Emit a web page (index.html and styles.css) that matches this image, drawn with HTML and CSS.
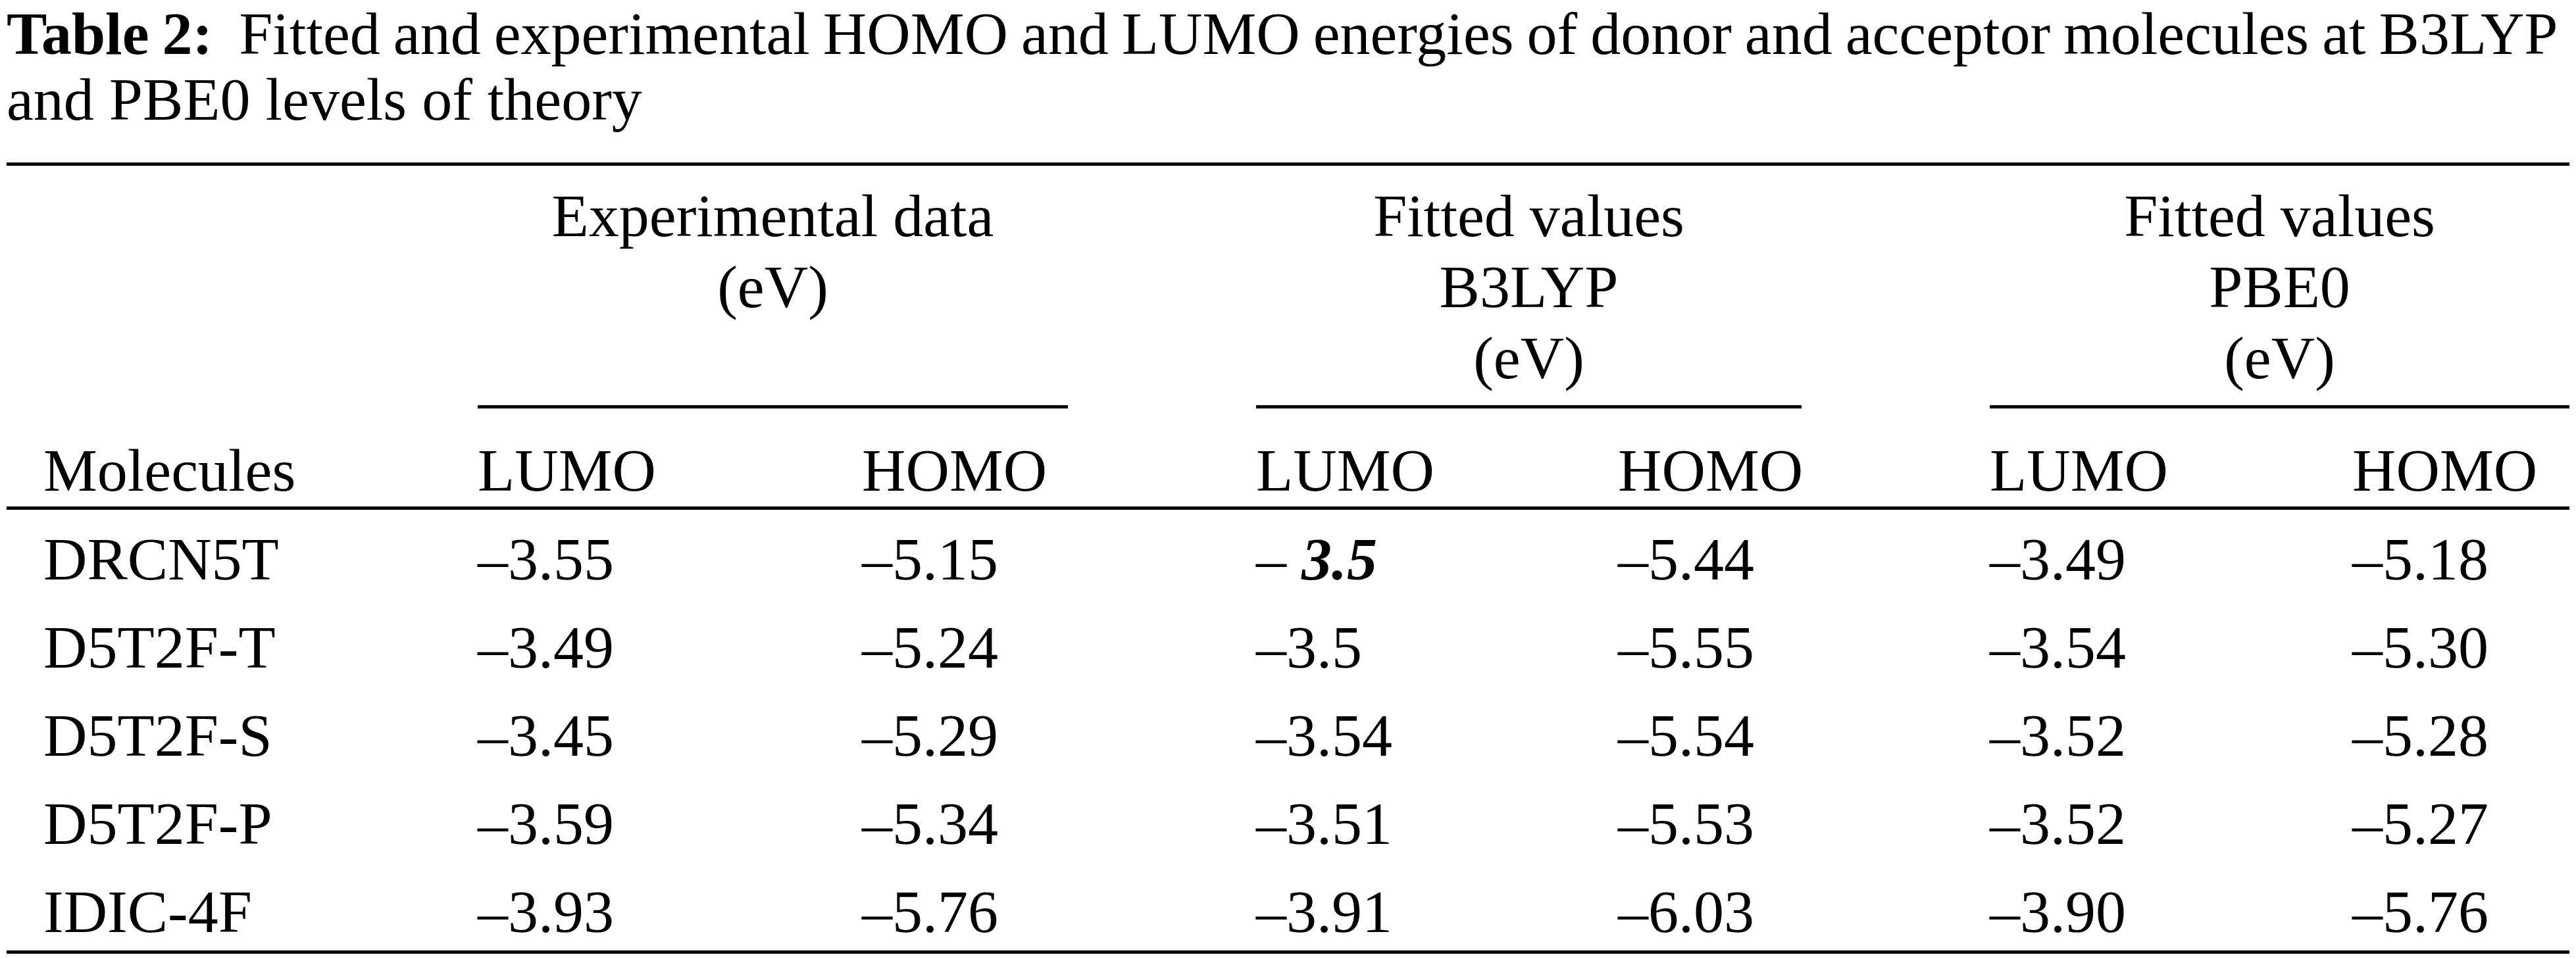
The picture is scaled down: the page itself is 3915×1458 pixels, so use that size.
FILE: index.html
```html
<!DOCTYPE html>
<html lang="en">
<head>
<meta charset="utf-8">
<title>Table 2</title>
<link rel="stylesheet" href="styles.css">
</head>
<body>
<div class="page">
  <p class="caption"><span class="cap-line first"><b class="label">Table 2:</b>&nbsp; Fitted and experimental HOMO and LUMO energies of donor and acceptor molecules at B3LYP</span><span class="cap-line second">and PBE0 levels of theory</span></p>

  <div class="table">
    <div class="row grp">
      <div class="cell"></div>
      <div class="cell group span2">Experimental data<br>(eV)</div>
      <div class="cell"></div>
      <div class="cell group span2">Fitted values<br>B3LYP<br>(eV)</div>
      <div class="cell"></div>
      <div class="cell group span2">Fitted values<br>PBE0<br>(eV)</div>
    </div>

    <div class="row head">
      <div class="cell name">Molecules</div>
      <div class="cell">LUMO</div>
      <div class="cell">HOMO</div>
      <div class="cell"></div>
      <div class="cell">LUMO</div>
      <div class="cell">HOMO</div>
      <div class="cell"></div>
      <div class="cell">LUMO</div>
      <div class="cell">HOMO</div>
    </div>

    <div class="row data">
      <div class="cell name">DRCN5T</div>
      <div class="cell">–3.55</div>
      <div class="cell">–5.15</div>
      <div class="cell"></div>
      <div class="cell">– <span class="hl">3.5</span></div>
      <div class="cell">–5.44</div>
      <div class="cell"></div>
      <div class="cell">–3.49</div>
      <div class="cell">–5.18</div>
    </div>

    <div class="row data">
      <div class="cell name">D5T2F-T</div>
      <div class="cell">–3.49</div>
      <div class="cell">–5.24</div>
      <div class="cell"></div>
      <div class="cell">–3.5</div>
      <div class="cell">–5.55</div>
      <div class="cell"></div>
      <div class="cell">–3.54</div>
      <div class="cell">–5.30</div>
    </div>

    <div class="row data">
      <div class="cell name">D5T2F-S</div>
      <div class="cell">–3.45</div>
      <div class="cell">–5.29</div>
      <div class="cell"></div>
      <div class="cell">–3.54</div>
      <div class="cell">–5.54</div>
      <div class="cell"></div>
      <div class="cell">–3.52</div>
      <div class="cell">–5.28</div>
    </div>

    <div class="row data">
      <div class="cell name">D5T2F-P</div>
      <div class="cell">–3.59</div>
      <div class="cell">–5.34</div>
      <div class="cell"></div>
      <div class="cell">–3.51</div>
      <div class="cell">–5.53</div>
      <div class="cell"></div>
      <div class="cell">–3.52</div>
      <div class="cell">–5.27</div>
    </div>

    <div class="row data">
      <div class="cell name">IDIC-4F</div>
      <div class="cell">–3.93</div>
      <div class="cell">–5.76</div>
      <div class="cell"></div>
      <div class="cell">–3.91</div>
      <div class="cell">–6.03</div>
      <div class="cell"></div>
      <div class="cell">–3.90</div>
      <div class="cell">–5.76</div>
    </div>
  </div>
</div>
</body>
</html>
```

FILE: styles.css
```css
html, body {
  margin: 0;
  padding: 0;
  background: #ffffff;
}

body {
  font-family: "Liberation Serif", "Times New Roman", serif;
  color: #000000;
  font-size: 92px;
  line-height: 108px;
}

.page {
  width: 3895px;
  padding-left: 10px;
}

.caption {
  margin: 0;
  white-space: nowrap;
}

.cap-line {
  display: block;
}

.cap-line.first {
  line-height: 102px;
  word-spacing: -3px;
}

.cap-line.second {
  line-height: 98px;
}

.label {
  font-weight: bold;
}

.table {
  margin-top: 47px;
  display: grid;
  grid-template-columns: 716px 584px 313px 286px 550px 279px 286px 551px 330px;
  border-top: 5px solid #000;
  border-bottom: 5px solid #000;
}

.row {
  display: contents;
}

.cell {
  white-space: nowrap;
  text-align: left;
}

.grp .cell {
  padding: 22px 0 18px;
}

.grp .group {
  text-align: center;
  border-bottom: 5px solid #000;
}

.span2 {
  grid-column: span 2;
}

.head .cell {
  padding: 40px 0 1px;
  border-bottom: 5px solid #000;
}

.data .cell {
  padding-top: 16px;
  line-height: 118px;
}

.row .name {
  padding-left: 56px;
}

.hl {
  font-weight: bold;
  font-style: italic;
}
```
